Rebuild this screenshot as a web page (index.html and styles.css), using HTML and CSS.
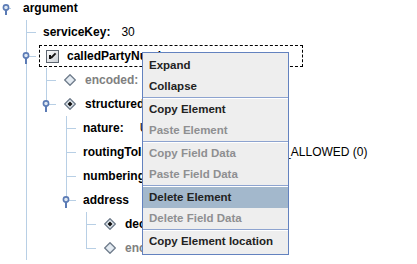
FILE: index.html
```html
<!DOCTYPE html>
<html lang="en">
<head>
    <meta charset="UTF-8">
    <title>Tree editor</title>
    <link rel="stylesheet" href="styles.css">
</head>
<body>
    <div class="tree">
        <div class="row root">
            <span class="lead">
                <svg width="16" height="16" viewBox="0 0 16 16">
                    <line x1="8" y1="8.5" x2="11" y2="8.5" stroke="#b8cfe5"/>
                    <line x1="6" y1="10" x2="6" y2="15" stroke="#5b7bb5" stroke-width="2"/>
                    <circle cx="6" cy="7.5" r="2.6" fill="#dfe8f2" stroke="#5b7bb5" stroke-width="1.6"/>
                </svg>
            </span>
            <span class="label">argument</span>
        </div>

        <div class="row">
            <span class="lead"></span>
            <span class="guide tee"></span>
            <span class="label">serviceKey:<span class="value">30</span></span>
        </div>

        <div class="row">
            <span class="lead"></span>
            <span class="guide pipe">
                <svg class="handle" width="20" height="24" viewBox="0 0 20 24">
                    <line x1="13" y1="12.5" x2="20" y2="12.5" stroke="#b8cfe5"/>
                    <line x1="10" y1="14" x2="10" y2="20" stroke="#5b7bb5" stroke-width="2"/>
                    <circle cx="10" cy="11.5" r="2.6" fill="#dfe8f2" stroke="#5b7bb5" stroke-width="1.6"/>
                </svg>
            </span>
            <span class="focus">
                <svg class="check" width="13" height="13" viewBox="0 0 13 13">
                    <defs>
                        <linearGradient id="cb" x1="0" y1="0" x2="1" y2="1">
                            <stop offset="0" stop-color="#ffffff"/>
                            <stop offset="1" stop-color="#c9ced4"/>
                        </linearGradient>
                    </defs>
                    <rect x="0.5" y="0.5" width="12" height="12" fill="url(#cb)" stroke="#5d6670"/>
                    <rect x="3" y="5" width="2" height="4" fill="#111"/>
                    <line x1="9.6" y1="3.4" x2="5" y2="8" stroke="#111" stroke-width="1.8"/>
                </svg>
                <span class="label">calledPartyNumber</span>
            </span>
        </div>

        <div class="row">
            <span class="lead"></span>
            <span class="guide pipe"></span>
            <span class="guide tee"></span>
            <svg class="node" width="12" height="12" viewBox="0 0 12 12">
                <polygon points="6,0.7 11.3,6 6,11.3 0.7,6" fill="#e4ebf2" stroke="#6f7c8b" stroke-width="1.3"/>
            </svg>
            <span class="label off">encoded:</span>
        </div>

        <div class="row">
            <span class="lead"></span>
            <span class="guide pipe"></span>
            <span class="guide elbow">
                <svg class="handle" width="20" height="24" viewBox="0 0 20 24">
                    <line x1="13" y1="12.5" x2="20" y2="12.5" stroke="#b8cfe5"/>
                    <line x1="10" y1="14" x2="10" y2="20" stroke="#5b7bb5" stroke-width="2"/>
                    <circle cx="10" cy="11.5" r="2.6" fill="#dfe8f2" stroke="#5b7bb5" stroke-width="1.6"/>
                </svg>
            </span>
            <svg class="node" width="12" height="12" viewBox="0 0 12 12">
                <polygon points="6,0.7 11.3,6 6,11.3 0.7,6" fill="#e4ebf2" stroke="#6f7c8b" stroke-width="1.3"/>
                <polygon points="6,3.5 8.5,6 6,8.5 3.5,6" fill="#111"/>
            </svg>
            <span class="label">structuredData</span>
        </div>

        <div class="row">
            <span class="lead"></span>
            <span class="guide pipe"></span>
            <span class="guide"></span>
            <span class="guide tee"></span>
            <span class="label">nature:<span class="value wide">UNKNOWN (0)</span></span>
        </div>

        <div class="row">
            <span class="lead"></span>
            <span class="guide pipe"></span>
            <span class="guide"></span>
            <span class="guide tee"></span>
            <span class="label">routingToIndicator:<span class="value tight">ROUTING_NOT_ALLOWED (0)</span></span>
        </div>

        <div class="row">
            <span class="lead"></span>
            <span class="guide pipe"></span>
            <span class="guide"></span>
            <span class="guide tee"></span>
            <span class="label">numberingPlan:<span class="value">ISDN (1)</span></span>
        </div>

        <div class="row">
            <span class="lead"></span>
            <span class="guide pipe"></span>
            <span class="guide"></span>
            <span class="guide elbow">
                <svg class="handle" width="20" height="24" viewBox="0 0 20 24">
                    <line x1="13" y1="12.5" x2="20" y2="12.5" stroke="#b8cfe5"/>
                    <line x1="10" y1="14" x2="10" y2="20" stroke="#5b7bb5" stroke-width="2"/>
                    <circle cx="10" cy="11.5" r="2.6" fill="#dfe8f2" stroke="#5b7bb5" stroke-width="1.6"/>
                </svg>
            </span>
            <span class="label">address</span>
        </div>

        <div class="row">
            <span class="lead"></span>
            <span class="guide pipe"></span>
            <span class="guide"></span>
            <span class="guide"></span>
            <span class="guide tee"></span>
            <svg class="node" width="12" height="12" viewBox="0 0 12 12">
                <polygon points="6,0.7 11.3,6 6,11.3 0.7,6" fill="#e4ebf2" stroke="#6f7c8b" stroke-width="1.3"/>
                <polygon points="6,3.5 8.5,6 6,8.5 3.5,6" fill="#111"/>
            </svg>
            <span class="label">decoded</span>
        </div>

        <div class="row">
            <span class="lead"></span>
            <span class="guide pipe"></span>
            <span class="guide"></span>
            <span class="guide"></span>
            <span class="guide elbow"></span>
            <svg class="node" width="12" height="12" viewBox="0 0 12 12">
                <polygon points="6,0.7 11.3,6 6,11.3 0.7,6" fill="#e4ebf2" stroke="#6f7c8b" stroke-width="1.3"/>
            </svg>
            <span class="label off">encoded</span>
        </div>
    </div>

    <!-- popup menu over the tree -->
    <div class="menu">
        <div class="item">Expand</div>
        <div class="item">Collapse</div>
        <div class="sep"></div>
        <div class="item">Copy Element</div>
        <div class="item off">Paste Element</div>
        <div class="sep"></div>
        <div class="item off">Copy Field Data</div>
        <div class="item off">Paste Field Data</div>
        <div class="sep"></div>
        <div class="item hot">Delete Element</div>
        <div class="item off">Delete Field Data</div>
        <div class="sep"></div>
        <div class="item">Copy Element location</div>
    </div>
</body>
</html>
```

FILE: styles.css
```css
* {
    margin: 0;
    padding: 0;
    box-sizing: border-box;
}

body {
    background-color: #FFFFFF;
    color: #000000;
    font-family: 'Liberation Sans', Arial, sans-serif;
    font-size: 12px;
    width: 417px;
    height: 264px;
    overflow: hidden;
    position: relative;
}

/* Tree */
.tree {
    display: flex;
    flex-direction: column;
}

.row {
    display: flex;
    align-items: center;
    height: 24px;
    white-space: nowrap;
}

/* first row sits a bit higher: its centre is at 8px */
.row.root {
    height: 20px;
    align-items: flex-start;
}

.row.root .label {
    line-height: 16px;
}

.lead {
    width: 16px;
    height: 100%;
    display: flex;
    flex-shrink: 0;
}

.guide {
    width: 20px;
    height: 100%;
    flex-shrink: 0;
    display: flex;
}

.guide.pipe {
    background: linear-gradient(#b8cfe5, #b8cfe5) 10px 0 / 1px 100% no-repeat;
}

.guide.tee {
    background:
        linear-gradient(#b8cfe5, #b8cfe5) 10px 0 / 1px 100% no-repeat,
        linear-gradient(#b8cfe5, #b8cfe5) 10px 12px / 10px 1px no-repeat;
}

.guide.elbow {
    background:
        linear-gradient(#b8cfe5, #b8cfe5) 10px 0 / 1px 12px no-repeat,
        linear-gradient(#b8cfe5, #b8cfe5) 10px 12px / 10px 1px no-repeat;
}

.label {
    font-weight: bold;
    margin-left: 7px;
}

.label.off {
    color: #808080;
}

.value {
    font-weight: normal;
    margin-left: 11px;
}

.value.wide {
    margin-left: 16px;
}

.value.tight {
    margin-left: 4px;
}

.node {
    margin-left: 8px;
    flex-shrink: 0;
}

.node + .label {
    margin-left: 9px;
}

/* Focused (selected) node */
.focus {
    display: flex;
    align-items: center;
    height: 22px;
    margin-left: 3px;
    padding-left: 6px;
    width: 264px;
    border: 1px dashed #000000;
}

.focus .label {
    margin-left: 8px;
}

/* Popup menu */
.menu {
    position: absolute;
    left: 142px;
    top: 52px;
    width: 147px;
    padding: 2px 0;
    background: #EEEEEE;
    border: 1px solid #6382BF;
}

.item {
    height: 21px;
    line-height: 21px;
    padding-left: 6px;
    font-size: 11.5px;
    font-weight: bold;
    color: #222222;
}

.item.off {
    color: #8E8F91;
}

.item.hot {
    background: #A3B8CC;
}

.sep {
    height: 2px;
    border-top: 1px solid #8DA3CF;
    background: #FFFFFF;
}
```
